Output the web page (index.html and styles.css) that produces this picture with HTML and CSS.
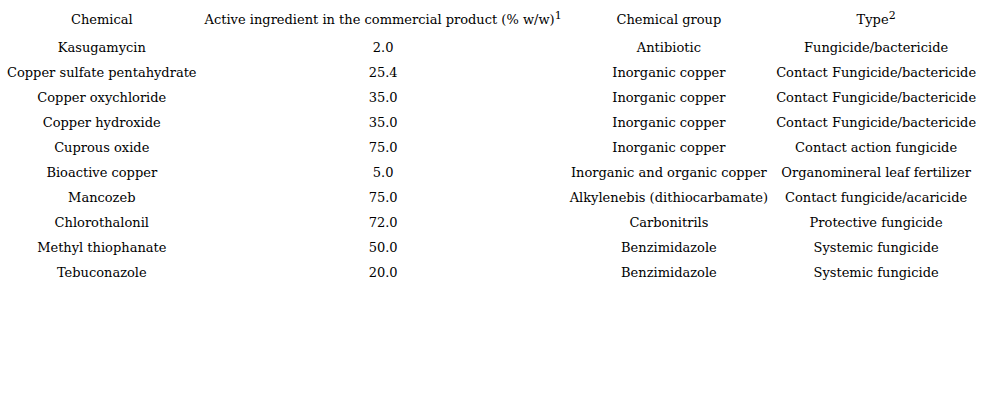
FILE: index.html
```html
<!DOCTYPE html>
<html>
<head>
<meta charset="utf-8">
<link rel="stylesheet" href="styles.css">
</head>
<body>
<table class="data">
<thead>
<tr><th>Chemical</th><th>Active ingredient in the commercial product (% w/w)<sup>1</sup></th><th>Chemical group</th><th>Type<sup>2</sup></th></tr>
</thead>
<tbody>
<tr><td>Kasugamycin</td><td>2.0</td><td>Antibiotic</td><td>Fungicide/bactericide</td></tr>
<tr><td>Copper sulfate pentahydrate</td><td>25.4</td><td>Inorganic copper</td><td>Contact Fungicide/bactericide</td></tr>
<tr><td>Copper oxychloride</td><td>35.0</td><td>Inorganic copper</td><td>Contact Fungicide/bactericide</td></tr>
<tr><td>Copper hydroxide</td><td>35.0</td><td>Inorganic copper</td><td>Contact Fungicide/bactericide</td></tr>
<tr><td>Cuprous oxide</td><td>75.0</td><td>Inorganic copper</td><td>Contact action fungicide</td></tr>
<tr><td>Bioactive copper</td><td>5.0</td><td>Inorganic and organic copper</td><td>Organomineral leaf fertilizer</td></tr>
<tr><td>Mancozeb</td><td>75.0</td><td>Alkylenebis (dithiocarbamate)</td><td>Contact fungicide/acaricide</td></tr>
<tr><td>Chlorothalonil</td><td>72.0</td><td>Carbonitrils</td><td>Protective fungicide</td></tr>
<tr><td>Methyl thiophanate</td><td>50.0</td><td>Benzimidazole</td><td>Systemic fungicide</td></tr>
<tr><td>Tebuconazole</td><td>20.0</td><td>Benzimidazole</td><td>Systemic fungicide</td></tr>
</tbody>
</table>
</body>
</html>
```
FILE: styles.css
```css
html, body {
  margin: 0;
  padding: 0;
  background: #fff;
}
.data {
  border-collapse: collapse;
  margin-left: 3px;
  font-family: "DejaVu Serif", serif;
  font-size: 13px;
  color: #000;
}
.data th, .data td {
  font-weight: normal;
  text-align: center;
  padding: 0 4px;
  height: 25px;
  white-space: nowrap;
}
.data th {
  height: 23px;
  vertical-align: top;
  padding-top: 12px;
}
.data sup {
  font-size: 11px;
  line-height: 0;
}
```
